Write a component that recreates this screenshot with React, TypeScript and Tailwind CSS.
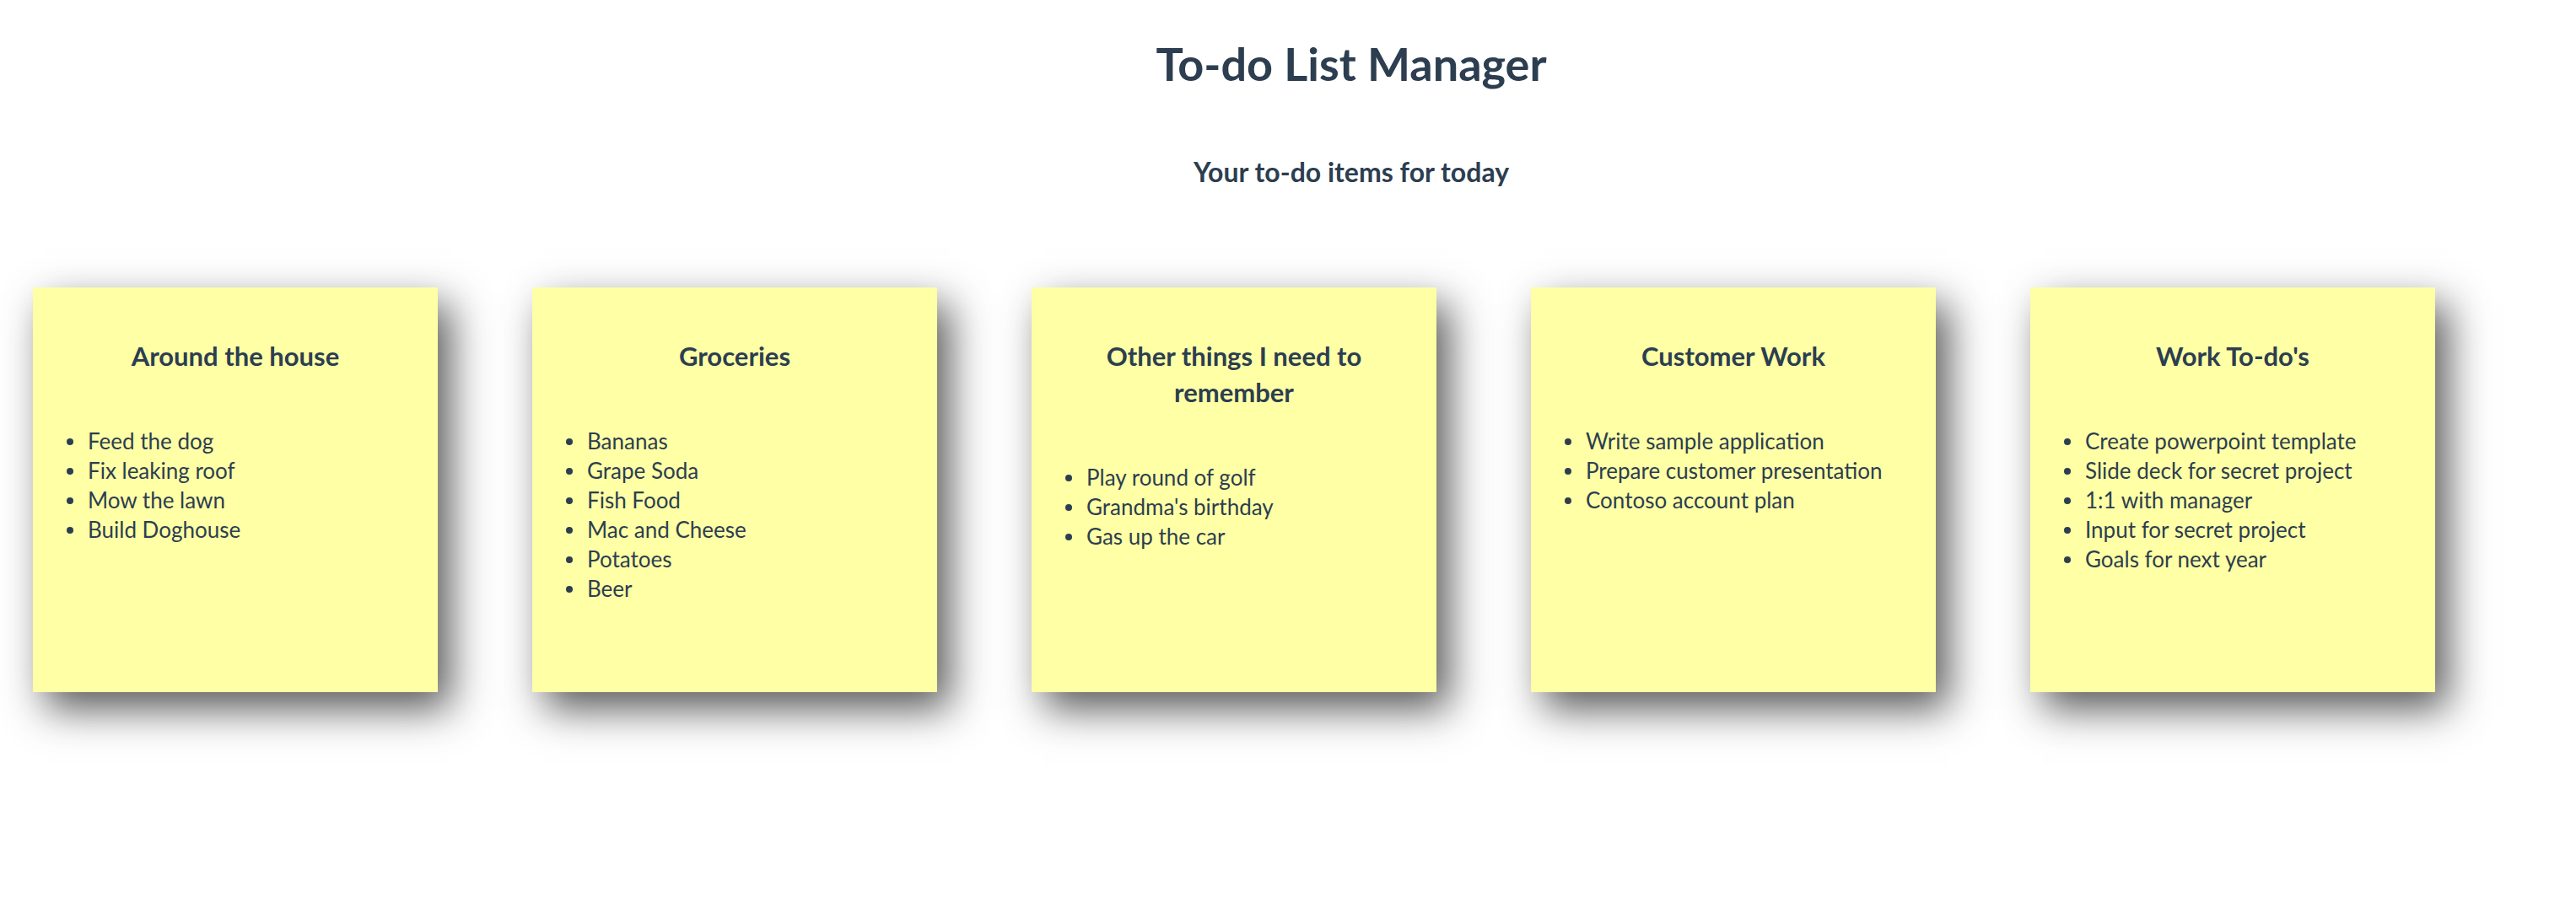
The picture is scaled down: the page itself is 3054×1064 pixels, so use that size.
import React from "react";

const lists: { title: string; items: string[] }[] = [
  { title: "Around the house", items: ["Feed the dog", "Fix leaking roof", "Mow the lawn", "Build Doghouse"] },
  { title: "Groceries", items: ["Bananas", "Grape Soda", "Fish Food", "Mac and Cheese", "Potatoes", "Beer"] },
  { title: "Other things I need to remember", items: ["Play round of golf", "Grandma's birthday", "Gas up the car"] },
  { title: "Customer Work", items: ["Write sample application", "Prepare customer presentation", "Contoso account plan"] },
  {
    title: "Work To-do's",
    items: [
      "Create powerpoint template",
      "Slide deck for secret project",
      "1:1 with manager",
      "Input for secret project",
      "Goals for next year",
    ],
  },
];

function Note({ title, items }: { title: string; items: string[] }) {
  return (
    <div className="w-[480px] h-[480px] shrink-0 bg-[#ffffa5] px-[32px] pt-[60px] shadow-[15px_20px_45px_rgba(33,33,33,0.75)]">
      <h3 className="text-center text-[31px] leading-[43px] font-bold">{title}</h3>
      <ul className="mt-[62px] pl-[8px]">
        {items.map((it) => (
          <li key={it} className="flex items-center text-[26px] leading-[35px]">
            <span className="w-[8px] h-[8px] rounded-full bg-[#2c3e50] shrink-0 mr-[17px]" />
            <span>{it}</span>
          </li>
        ))}
      </ul>
    </div>
  );
}

export default function App() {
  return (
    <div className="min-h-screen bg-white text-[#2c3e50] font-['Lato',sans-serif]">
      <div className="pl-[150px] text-center">
        <h1 className="pt-[46px] text-[54px] leading-[60px] font-bold">To-do List Manager</h1>
        <h2 className="mt-[78px] text-[32px] leading-[40px] font-bold">Your to-do items for today</h2>
      </div>
      <div className="flex gap-[112px] pl-[39px] mt-[117px]">
        {lists.map((l) => (
          <Note key={l.title} title={l.title} items={l.items} />
        ))}
      </div>
    </div>
  );
}
